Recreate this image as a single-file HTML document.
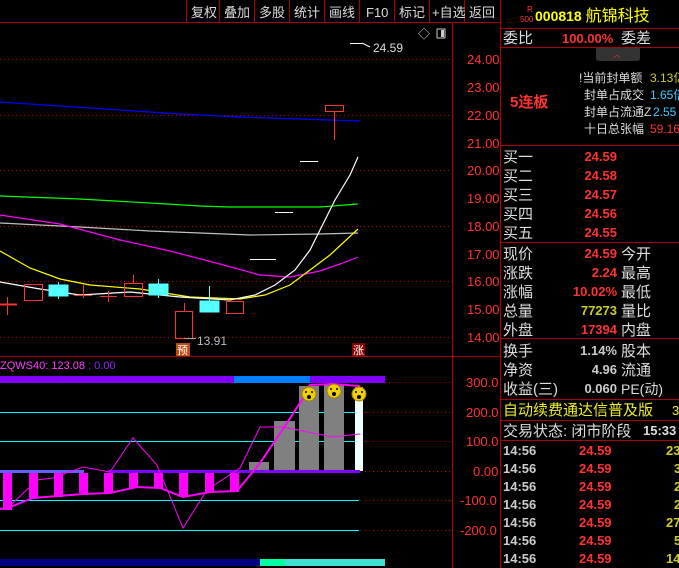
<!DOCTYPE html><html><head><meta charset="utf-8"><style>
body{margin:0;background:#000;width:679px;height:568px;overflow:hidden}
svg{display:block}
text{font-family:"Liberation Sans","Noto Sans CJK SC",sans-serif}
</style></head><body>
<svg width="679" height="568" viewBox="0 0 679 568">
<rect width="679" height="568" fill="#000"/>
<!-- toolbar -->
<g stroke="#a00" stroke-width="1">
<line x1="0" y1="22.5" x2="500" y2="22.5"/>
<line x1="186.5" y1="0" x2="186.5" y2="22"/><line x1="219.5" y1="0" x2="219.5" y2="22"/><line x1="254.5" y1="0" x2="254.5" y2="22"/><line x1="289.5" y1="0" x2="289.5" y2="22"/><line x1="324.5" y1="0" x2="324.5" y2="22"/><line x1="359.5" y1="0" x2="359.5" y2="22"/><line x1="394.5" y1="0" x2="394.5" y2="22"/><line x1="429.5" y1="0" x2="429.5" y2="22"/><line x1="464.5" y1="0" x2="464.5" y2="22"/>
</g>
<g fill="#ddd" font-size="13">
<text x="191" y="17">复权</text><text x="224" y="17">叠加</text><text x="259" y="17">多股</text><text x="294" y="17">统计</text><text x="329" y="17">画线</text><text x="366" y="17">F10</text><text x="399" y="17">标记</text><text x="432" y="17">+自选</text><text x="469" y="17">返回</text>
</g>
<!-- axis -->
<line x1="452.5" y1="22" x2="452.5" y2="568" stroke="#a00"/>
<line x1="500.5" y1="0" x2="500.5" y2="568" stroke="#a00"/>
<line x1="0" y1="356.5" x2="500" y2="356.5" stroke="#a00"/>
<g stroke="#c00" stroke-dasharray="1,3">
<line x1="0" y1="59.5" x2="450" y2="59.5"/><line x1="0" y1="115.5" x2="450" y2="115.5"/><line x1="0" y1="170.5" x2="450" y2="170.5"/><line x1="0" y1="226.5" x2="450" y2="226.5"/><line x1="0" y1="281.5" x2="450" y2="281.5"/><line x1="0" y1="337.5" x2="450" y2="337.5"/>
<line x1="365" y1="382.5" x2="450" y2="382.5"/><line x1="365" y1="412.5" x2="450" y2="412.5"/><line x1="365" y1="441.5" x2="450" y2="441.5"/><line x1="365" y1="471.5" x2="450" y2="471.5"/><line x1="365" y1="500.5" x2="450" y2="500.5"/><line x1="365" y1="530.5" x2="450" y2="530.5"/>
</g>
<g fill="#ff3232" font-size="13">
<text x="467" y="64">24.00</text><text x="467" y="92">23.00</text><text x="467" y="120">22.00</text><text x="467" y="148">21.00</text><text x="467" y="175">20.00</text><text x="467" y="203">19.00</text><text x="467" y="231">18.00</text><text x="467" y="259">17.00</text><text x="467" y="286">16.00</text><text x="467" y="314">15.00</text><text x="467" y="342">14.00</text>
<text x="466" y="387">300.0</text><text x="466" y="417">200.0</text><text x="466" y="446">100.0</text><text x="473" y="476">0.00</text><text x="460" y="505">-100.0</text><text x="460" y="535">-200.0</text>
</g>
<text x="418" y="38" fill="#ccc" font-size="12">◇</text>
<rect x="437" y="29" width="8" height="9" fill="none" stroke="#ccc"/><rect x="441" y="30" width="3" height="7" fill="#ccc"/>
<!-- MAs -->
<g fill="none" stroke-width="1.2">
<polyline stroke="#0000ff" points="0,102 60,106 120,110 180,114 240,117 300,119 360,121"/>
<polyline stroke="#00ff00" points="0,196 80,199 150,203 200,206 230,207 320,207 358,204"/>
<polyline stroke="#c0c0c0" points="0,223 80,227 150,231 200,233 250,235 320,234 358,233"/>
<polyline stroke="#ff00ff" points="0,215 60,224 120,240 170,251 220,264 260,275 290,277 320,271 340,264 358,257"/>
<polyline stroke="#ffff00" points="0,251 30,268 60,279 90,285 140,289 190,297 240,299 265,295 290,285 310,270 330,255 358,229"/>
<polyline stroke="#fff" points="0,282 40,289 80,295 130,292 180,297 230,300 255,295 275,285 295,270 310,250 320,230 335,200 350,175 358,157"/>
</g>
<!-- candles -->
<g stroke="#ff3232" fill="none">
<line x1="0" y1="304.5" x2="17" y2="304.5" stroke-width="2"/><line x1="7.5" y1="297" x2="7.5" y2="315"/>
<rect x="24.5" y="284.5" width="18" height="16"/>
<line x1="74" y1="295.5" x2="92" y2="295.5"/><line x1="83.5" y1="285" x2="83.5" y2="298"/>
<line x1="100" y1="296.5" x2="117" y2="296.5"/><line x1="108.5" y1="291" x2="108.5" y2="302"/>
<rect x="124.5" y="283.5" width="18" height="13"/><line x1="133.5" y1="275" x2="133.5" y2="283"/>
<rect x="175.5" y="311.5" width="17" height="27"/><line x1="184.5" y1="303" x2="184.5" y2="311"/>
<rect x="226.5" y="301.5" width="17" height="12"/>
<rect x="325.5" y="105.5" width="18" height="6"/><line x1="334.5" y1="112" x2="334.5" y2="140"/>
</g>
<g fill="#5ff" stroke="#5ff">
<rect x="49" y="285" width="19" height="11"/><line x1="58.5" y1="282" x2="58.5" y2="299"/>
<rect x="149" y="284" width="19" height="11"/><line x1="158.5" y1="279" x2="158.5" y2="298"/>
<rect x="200" y="301" width="19" height="11"/><line x1="209.5" y1="286" x2="209.5" y2="301"/>
</g>
<g stroke="#fff"><line x1="250" y1="259.5" x2="276" y2="259.5"/><line x1="275" y1="212.5" x2="293" y2="212.5"/><line x1="300" y1="161.5" x2="318" y2="161.5"/><line x1="350" y1="43.5" x2="362" y2="43.5"/><line x1="362" y1="43" x2="370" y2="47"/></g>
<text x="373" y="52" fill="#ddd" font-size="12">24.59</text>
<line x1="185" y1="338.5" x2="196" y2="338.5" stroke="#aaa"/>
<text x="197" y="345" fill="#bbb" font-size="12">13.91</text>
<rect x="176" y="343" width="14" height="13" fill="#c04a10"/><text x="177" y="354" fill="#fff" font-size="11">预</text>
<rect x="352" y="343" width="13" height="13" fill="#8b0000"/><text x="353" y="354" fill="#fff" font-size="11">涨</text>
<!-- indicator -->
<text x="0" y="369" font-size="11" fill="#ff40ff">ZQWS40: 123.08 <tspan fill="#9020ff">: 0.00</tspan></text>
<rect x="0" y="376" width="234" height="7" fill="#8000ff"/><rect x="234" y="376" width="76" height="7" fill="#0080ff"/><rect x="310" y="376" width="75" height="7" fill="#8000ff"/>
<g stroke="#0ff"><line x1="0" y1="412.5" x2="359" y2="412.5"/><line x1="0" y1="441.5" x2="359" y2="441.5"/><line x1="0" y1="500.5" x2="359" y2="500.5"/><line x1="0" y1="530.5" x2="359" y2="530.5"/></g>
<g fill="#808080"><rect x="249" y="462" width="20" height="9"/><rect x="274" y="421" width="21" height="50"/><rect x="299" y="386" width="20" height="85"/><rect x="324" y="385" width="20" height="86"/></g>
<rect x="355" y="387" width="8" height="84" fill="#f0ffff"/>
<rect x="0" y="470" width="84" height="3" fill="#6060ff"/><rect x="108" y="470" width="252" height="3" fill="#8000ff"/>
<g fill="#ff00ff"><rect x="3" y="473" width="9" height="37"/><rect x="29" y="473" width="9" height="25"/><rect x="54" y="473" width="9" height="24"/><rect x="79" y="473" width="9" height="20"/><rect x="104" y="473" width="9" height="20"/><rect x="129" y="473" width="9" height="15"/><rect x="154" y="473" width="9" height="15"/><rect x="179" y="473" width="9" height="24"/><rect x="205" y="473" width="9" height="19"/><rect x="230" y="473" width="9" height="19"/></g>
<polyline fill="none" stroke="#ff00ff" stroke-width="1" points="12,504 37,480 53,478 83,467 110,472 133,438 157,465 183,528 207,490 240,468 260,427 283,427 333,437 360,434"/>
<polyline fill="none" stroke="#ff00ff" stroke-width="2" points="0,509 10,507 33,498 83,494 110,493 137,487 160,488 183,497 210,492 237,491 260,463 287,423 303,398 310,385 333,384 360,386"/>
<g fill="#f0d000" stroke="#a08000"><circle cx="309" cy="394" r="7"/><circle cx="334" cy="391" r="7"/><circle cx="359" cy="394" r="7"/></g>
<g fill="#000"><circle cx="309" cy="397" r="2"/><circle cx="334" cy="394" r="2"/><circle cx="359" cy="397" r="2"/><circle cx="306" cy="392" r="1"/><circle cx="312" cy="392" r="1"/><circle cx="331" cy="389" r="1"/><circle cx="337" cy="389" r="1"/><circle cx="356" cy="392" r="1"/><circle cx="362" cy="392" r="1"/></g>
<rect x="0" y="559" width="260" height="7" fill="#000080"/><rect x="260" y="559" width="25" height="7" fill="#00ffa0"/><rect x="285" y="559" width="100" height="7" fill="#40e0d0"/>
<!-- right panel -->
<g stroke="#a00"><line x1="500" y1="28.5" x2="679" y2="28.5"/><line x1="500" y1="47.5" x2="679" y2="47.5"/><line x1="500" y1="145.5" x2="679" y2="145.5"/><line x1="500" y1="242.5" x2="679" y2="242.5"/><line x1="500" y1="338.5" x2="679" y2="338.5"/><line x1="500" y1="399.5" x2="679" y2="399.5"/><line x1="500" y1="420.5" x2="679" y2="420.5"/><line x1="500" y1="440.5" x2="679" y2="440.5"/></g>
<text x="527" y="12" fill="#ff3232" font-size="8">R</text><text x="520" y="22" fill="#ff3232" font-size="8">500</text>
<text x="535" y="21" fill="#ff0" font-size="14" font-weight="bold">000818 <tspan font-weight="normal" font-size="16">航锦科技</tspan></text>
<text x="503" y="43" fill="#ddd" font-size="15">委比</text><text x="562" y="43" fill="#ff3232" font-size="13" font-weight="bold">100.00%</text><text x="621" y="43" fill="#ddd" font-size="15">委差</text>
<path d="M596 48 H640 V58 Q640 61 636 61 H600 Q596 61 596 58Z" fill="#333"/><text x="613" y="57" fill="#f33" font-size="8">︿</text>
<text x="510" y="107" fill="#ff3232" font-size="15" font-weight="bold">5连板</text>
<g font-size="12" fill="#ddd"><text x="579" y="82">!当前封单额</text><text x="584" y="99">封单占成交</text><text x="584" y="116">封单占流通Z</text><text x="584" y="133">十日总张幅</text></g>
<text x="650" y="82" fill="#cc2" font-size="12">3.13亿</text><text x="650" y="99" fill="#4cf" font-size="12">1.65倍</text><text x="653" y="116" fill="#4cf" font-size="12">2.55</text><text x="650" y="133" fill="#f33" font-size="12">59.16</text>
<g font-size="15" fill="#ddd"><text x="503" y="162">买一</text><text x="503" y="181">买二</text><text x="503" y="200">买三</text><text x="503" y="219">买四</text><text x="503" y="238">买五</text>
<text x="503" y="259">现价</text><text x="503" y="278">涨跌</text><text x="503" y="297">涨幅</text><text x="503" y="316">总量</text><text x="503" y="335">外盘</text>
<text x="621" y="259">今开</text><text x="621" y="278">最高</text><text x="621" y="297">最低</text><text x="621" y="316">量比</text><text x="621" y="335">内盘</text>
<text x="503" y="356">换手</text><text x="503" y="375">净资</text><text x="503" y="394">收益(三)</text><text x="621" y="356">股本</text><text x="621" y="375">流通</text><text x="621" y="394" font-size="14">PE(动)</text>
<text x="503" y="436">交易状态: 闭市阶段</text></g>
<g font-size="13" font-weight="bold" text-anchor="end"><g fill="#ff3232"><text x="617" y="161">24.59</text><text x="617" y="180">24.58</text><text x="617" y="199">24.57</text><text x="617" y="218">24.56</text><text x="617" y="237">24.55</text><text x="617" y="258">24.59</text><text x="617" y="277">2.24</text><text x="617" y="296">10.02%</text><text x="617" y="334">17394</text></g>
<text x="617" y="315" fill="#cc2">77273</text><g fill="#ccc"><text x="617" y="355">1.14%</text><text x="617" y="374">4.96</text><text x="617" y="393">0.060</text></g></g>
<text x="503" y="415" fill="#ee2" font-size="15">自动续费通达信普及版</text><text x="672" y="415" fill="#ee2" font-size="13">3</text>
<text x="643" y="435" fill="#ddd" font-size="13" font-weight="bold">15:33</text>
<g font-size="13" font-weight="bold"><g fill="#ccc"><text x="503" y="455">14:56</text><text x="503" y="473">14:56</text><text x="503" y="491">14:56</text><text x="503" y="509">14:56</text><text x="503" y="527">14:56</text><text x="503" y="545">14:56</text><text x="503" y="563">14:56</text></g>
<g fill="#ff3232"><text x="579" y="455">24.59</text><text x="579" y="473">24.59</text><text x="579" y="491">24.59</text><text x="579" y="509">24.59</text><text x="579" y="527">24.59</text><text x="579" y="545">24.59</text><text x="579" y="563">24.59</text></g>
<g fill="#cc2"><text x="666" y="455">23</text><text x="674" y="473">3</text><text x="674" y="491">2</text><text x="674" y="509">2</text><text x="666" y="527">27</text><text x="674" y="545">5</text><text x="666" y="563">14</text></g></g>
</svg>
</body></html>
